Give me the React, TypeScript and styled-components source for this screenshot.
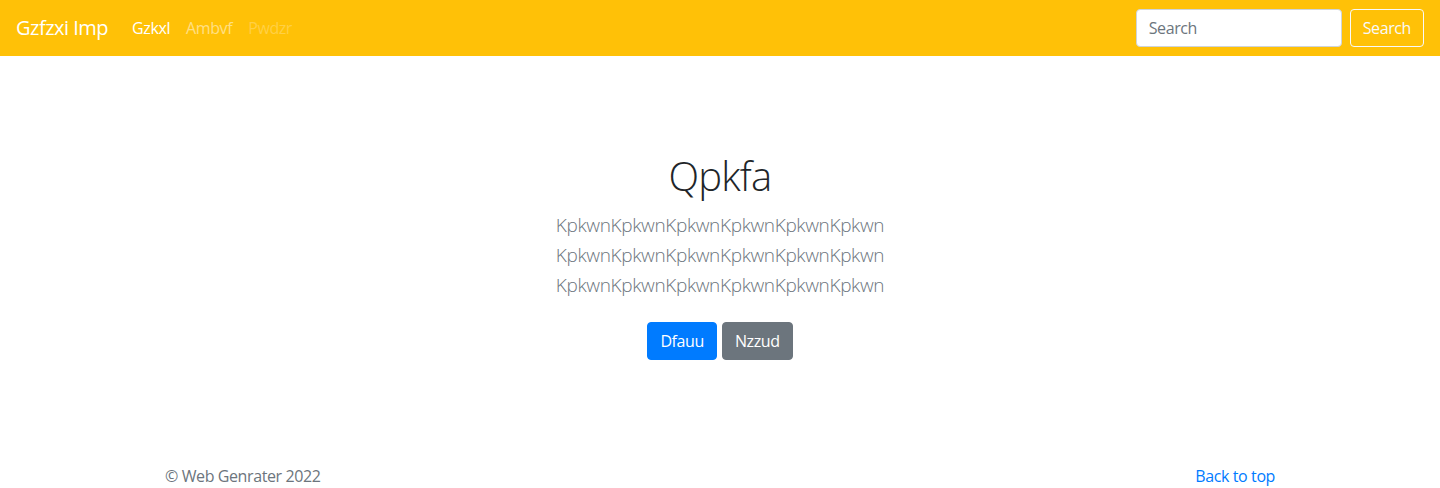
import React from "react";
import styled, { createGlobalStyle } from "styled-components";

const Global = createGlobalStyle`
  html, body { margin: 0; padding: 0; }
  body {
    font-family: "Open Sans", "Liberation Sans", sans-serif;
    font-size: 16px;
    line-height: 1.5;
    letter-spacing: -0.4px;
    color: #212529;
    background: #fff;
  }
  * { box-sizing: border-box; }
`;

const Navbar = styled.nav`
  display: flex;
  align-items: center;
  justify-content: space-between;
  height: 56px;
  padding: 8px 16px;
  background: #ffc107;
`;

const Left = styled.div`
  display: flex;
  align-items: center;
`;

const Brand = styled.a`
  font-size: 20px;
  line-height: 30px;
  letter-spacing: -0.5px;
  padding: 5px 0;
  margin-right: 16px;
  color: #fff;
  text-decoration: none;
`;

const NavLink = styled.a<{ $state: "active" | "normal" | "disabled" }>`
  padding: 8px;
  line-height: 24px;
  text-decoration: none;
  color: ${(p) =>
    p.$state === "active"
      ? "#fff"
      : p.$state === "normal"
      ? "rgba(255,255,255,0.5)"
      : "rgba(255,255,255,0.25)"};
`;

const Form = styled.form`
  display: flex;
  align-items: center;
  gap: 8px;
`;

const Input = styled.input`
  width: 206px;
  height: 38px;
  padding: 6px 12px;
  font: inherit;
  letter-spacing: inherit;
  color: #495057;
  border: 1px solid #ced4da;
  border-radius: 4px;
  background: #fff;
  &::placeholder { color: #6c757d; }
`;

const OutlineButton = styled.button`
  height: 38px;
  padding: 6px 12px;
  font: inherit;
  letter-spacing: inherit;
  color: #f8f9fa;
  background: transparent;
  border: 1px solid #f8f9fa;
  border-radius: 4px;
`;

const Hero = styled.section`
  padding: 96px 0 48px;
  text-align: center;
`;

const HeroInner = styled.div`
  max-width: 640px;
  margin: 0 auto;
  padding: 0 15px;
`;

const Heading = styled.h1`
  margin: 0 0 8px;
  font-size: 40px;
  font-weight: 300;
  line-height: 48px;
  letter-spacing: -0.8px;
`;

const Lead = styled.p`
  margin: 0 0 16px;
  padding-top: 2px;
  font-size: 19px;
  font-weight: 300;
  line-height: 30px;
  letter-spacing: -0.35px;
  color: #6c757d;
`;

const Actions = styled.div`
  display: flex;
  justify-content: center;
  gap: 5px;
  padding: 6px 0 8px;
`;

const Btn = styled.a<{ $variant: "primary" | "secondary" }>`
  display: inline-block;
  padding: 6px 12px;
  line-height: 24px;
  border-radius: 4px;
  border: 1px solid ${(p) => (p.$variant === "primary" ? "#007bff" : "#6c757d")};
  background: ${(p) => (p.$variant === "primary" ? "#007bff" : "#6c757d")};
  color: #fff;
  text-decoration: none;
`;

const Footer = styled.footer`
  padding: 48px 0;
  color: #6c757d;
`;

const FooterInner = styled.div`
  max-width: 1140px;
  margin: 0 auto;
  padding: 0 15px;
  display: flex;
  justify-content: space-between;
`;

const FooterText = styled.p`
  margin: 0;
`;

const TopLink = styled.a`
  color: #007bff;
  text-decoration: none;
`;

export default function App() {
  return (
    <>
      <Global />
      <Navbar>
        <Left>
          <Brand href="#">Gzfzxi Imp</Brand>
          <NavLink $state="active" href="#">Gzkxl</NavLink>
          <NavLink $state="normal" href="#">Ambvf</NavLink>
          <NavLink $state="disabled" href="#">Pwdzr</NavLink>
        </Left>
        <Form onSubmit={(e) => e.preventDefault()}>
          <Input type="search" placeholder="Search" aria-label="Search" />
          <OutlineButton type="submit">Search</OutlineButton>
        </Form>
      </Navbar>
      <Hero>
        <HeroInner>
          <Heading>Qpkfa</Heading>
          <Lead>
            KpkwnKpkwnKpkwnKpkwnKpkwnKpkwn
            <br />
            KpkwnKpkwnKpkwnKpkwnKpkwnKpkwn
            <br />
            KpkwnKpkwnKpkwnKpkwnKpkwnKpkwn
          </Lead>
          <Actions>
            <Btn $variant="primary" href="#">Dfauu</Btn>
            <Btn $variant="secondary" href="#">Nzzud</Btn>
          </Actions>
        </HeroInner>
      </Hero>
      <Footer>
        <FooterInner>
          <FooterText>© Web Genrater 2022</FooterText>
          <TopLink href="#">Back to top</TopLink>
        </FooterInner>
      </Footer>
    </>
  );
}
